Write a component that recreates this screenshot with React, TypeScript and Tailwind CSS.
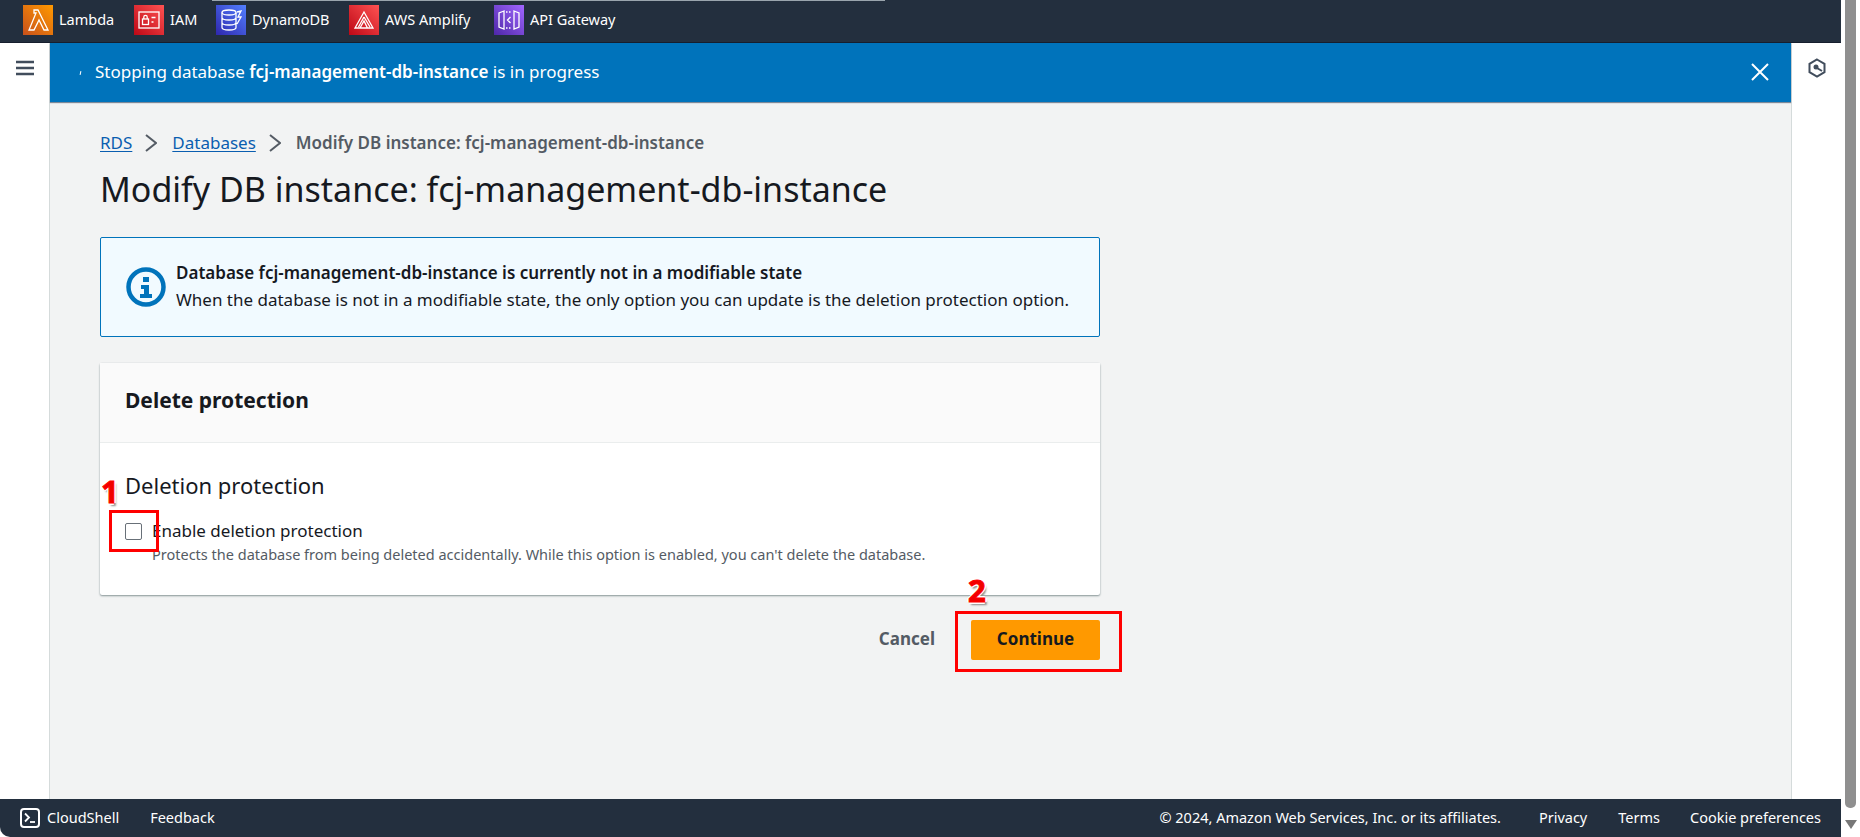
import { useState } from "react";

function ServiceIcon({ id, from, to, children }: { id: string; from: string; to: string; children: React.ReactNode }) {
  return (
    <svg width="30" height="30" viewBox="0 0 30 30" className="shrink-0">
      <defs>
        <linearGradient id={id} x1="0" y1="1" x2="1" y2="0">
          <stop offset="0" stopColor={from} />
          <stop offset="1" stopColor={to} />
        </linearGradient>
      </defs>
      <rect width="30" height="30" fill={`url(#${id})`} />
      <g fill="none" stroke="#fff" strokeWidth="1.3">
        {children}
      </g>
    </svg>
  );
}

const services = [
  {
    name: "Lambda",
    width: "w-[111px]",
    icon: (
      <ServiceIcon id="lambda" from="#c8511b" to="#ff9900">
        <path d="M6 25h5l5-10 5 10h4L15 5h-4v3h2L6 25z" />
      </ServiceIcon>
    ),
  },
  {
    name: "IAM",
    width: "w-[82px]",
    icon: (
      <ServiceIcon id="iam" from="#bd0816" to="#ff5252">
        <rect x="5" y="7" width="20" height="16" />
        <rect x="8.5" y="14" width="6" height="5.5" />
        <path d="M9.8 14v-2a1.7 1.7 0 0 1 3.4 0v2M17.5 12.5h4M17.5 17h2" />
      </ServiceIcon>
    ),
  },
  {
    name: "DynamoDB",
    width: "w-[133px]",
    icon: (
      <ServiceIcon id="dynamo" from="#2e27ad" to="#527fff">
        <ellipse cx="13" cy="7.5" rx="7" ry="2.5" />
        <path d="M6 7.500v15c0 1.400 3 2.500 7 2.500s7-1.100 7-2.500v-15M6 12.500c0 1.400 3 2.500 7 2.500s7-1.100 7-2.500M6 17.500c0 1.400 3 2.500 7 2.500s7-1.100 7-2.500M21 7l4-1-3 6h3l-4 7" />
      </ServiceIcon>
    ),
  },
  {
    name: "AWS Amplify",
    width: "w-[145px]",
    icon: (
      <ServiceIcon id="amplify" from="#bd0816" to="#ff5252">
        <path d="M15 7L6 23h18L15 7zM15 12l-5.500 10M15 12l6 10M11 23l4-7 3.500 7" />
      </ServiceIcon>
    ),
  },
  {
    name: "API Gateway",
    width: "w-[122px]",
    icon: (
      <ServiceIcon id="apigw" from="#4d27a8" to="#a166ff">
        <path d="M10 6L5 8v14l5 2V6zM20 6l5 2v14l-5 2V6zM16.500 12l-3 3 3 3" />
        <path d="M12 7h6M12 23h6" strokeDasharray="1.500 1.500" />
      </ServiceIcon>
    ),
  },
];

function Crumb() {
  return (
    <svg width="12" height="18" viewBox="0 0 12 18" className="shrink-0">
      <path d="M1 1l10 8-10 8" fill="none" stroke="#545b64" strokeWidth="2" />
    </svg>
  );
}

function Step({ label }: { label: string }) {
  return (
    <span className="text-[31px] leading-none font-bold text-[#f00000] [-webkit-text-stroke:1px_#ff0000] [text-shadow:-2px_0_0_#fff,2px_0_0_#fff,0_-2px_0_#fff,0_2px_0_#fff,2px_3px_2px_#8a8a8a]">
      {label}
    </span>
  );
}

export default function App() {
  const [enabled, setEnabled] = useState(false);

  return (
    <div className="flex h-[837px] w-[1860px] overflow-hidden bg-white font-['Noto_Sans',sans-serif]">
      <div className="flex w-[1841px] flex-col">
        {/* top bar */}
        <div className="relative flex h-[43px] shrink-0 items-center border-b border-[#161e2d] bg-[#232f3e] pb-[2px] pl-[23px] text-[14.500px] text-white">
          <div className="absolute top-0 left-[212px] h-px w-[673px] bg-[#9aa5ad]" />
          {services.map((s) => (
            <div key={s.name} className={`flex items-center gap-[6px] ${s.width}`}>
              {s.icon}
              <span>{s.name}</span>
            </div>
          ))}
        </div>

        <div className="flex min-h-0 flex-1">
          {/* left rail */}
          <div className="w-[49px] shrink-0 bg-white pt-[17px] pl-[16px]">
            <svg width="18" height="16" viewBox="0 0 18 16">
              <path d="M0 2h18M0 8h18M0 14h18" stroke="#414d5c" strokeWidth="2.500" />
            </svg>
          </div>

          {/* main content */}
          <div className="relative min-w-0 flex-1 border-x border-[#d5dbdb] bg-[#f2f3f3]">
            <div className="flex h-[59px] items-center bg-[#0073bb] pr-[22px] pb-[2px] pl-[30px] text-[17px] text-white shadow-[0_1px_1px_#7d8998]">
              <span className="mt-[2px] mr-[14px] h-[4px] w-px rotate-12 bg-white" />
              <span>
                Stopping database <b className="font-semibold">fcj-management-db-instance</b> is in progress
              </span>
              <svg width="18" height="18" viewBox="0 0 18 18" className="ml-auto">
                <path d="M1 1l16 16M17 1L1 17" stroke="#fff" strokeWidth="2" />
              </svg>
            </div>

            <div className="ml-[50px] w-[1000px] pt-[30px]">
              <div className="flex h-[22px] items-center text-[17px]">
                <a className="text-[#0a5eb0] underline underline-offset-2">RDS</a>
                <span className="mr-[15px] ml-[13px]"><Crumb /></span>
                <a className="text-[#0a5eb0] underline underline-offset-2">Databases</a>
                <span className="mr-[15px] ml-[13px]"><Crumb /></span>
                <span className="font-semibold text-[#545b64]">Modify DB instance: fcj-management-db-instance</span>
              </div>

              <h1 className="mt-[13px] text-[34px] leading-[44px] text-[#16191f]">Modify DB instance: fcj-management-db-instance</h1>

              <div className="mt-[26px] flex h-[100px] items-center rounded-[2px] border-[1.500px] border-[#0073bb] bg-[#f1faff] pl-[25px] text-[17px] leading-[27px] text-[#16191f]">
                <svg width="40" height="40" viewBox="0 0 40 40" className="shrink-0">
                  <circle cx="20" cy="20" r="17.500" fill="none" stroke="#0073bb" strokeWidth="4.500" />
                  <path d="M17 10h6v5h-6zM15 18h8v9h3v4H14v-4h4v-5h-3z" fill="#0073bb" />
                </svg>
                <div className="mt-[-3px] ml-[10px]">
                  <div className="font-semibold">Database fcj-management-db-instance is currently not in a modifiable state</div>
                  <div>When the database is not in a modifiable state, the only option you can update is the deletion protection option.</div>
                </div>
              </div>

              <div className="mt-[26px] h-[232px] rounded-[2px] bg-white shadow-[0_1px_2px_#879596,0_0_1px_#c5cbcf]">
                <div className="flex h-[80px] items-center border-b border-[#eaeded] bg-[#fafafa] pb-[4px] pl-[25px] text-[21px] font-bold text-[#16191f]">
                  Delete protection
                </div>
                <div className="pt-[26px] pl-[25px]">
                  <div className="text-[22px] leading-[32px] text-[#16191f]">Deletion protection</div>
                  <label className="mt-[18px] flex items-start">
                    <input
                      type="checkbox"
                      checked={enabled}
                      onChange={(e) => setEnabled(e.target.checked)}
                      className="mt-[4px] h-[17px] w-[17px] appearance-none rounded-[2px] border border-[#687078] bg-white"
                    />
                    <span className="ml-[10px]">
                      <span className="block text-[17px] leading-[24px] text-[#16191f]">Enable deletion protection</span>
                      <span className="block text-[14.500px] leading-[22px] text-[#545b64]">
                        Protects the database from being deleted accidentally. While this option is enabled, you can't delete the database.
                      </span>
                    </span>
                  </label>
                </div>
              </div>

              <div className="mt-[25px] flex items-center justify-end">
                <button className="mr-[36px] pb-[2px] text-[17px] font-bold text-[#545b64]">Cancel</button>
                <button className="h-[40px] w-[129px] rounded-[2px] bg-[#ff9900] pb-[2px] text-[17px] font-bold text-[#16191f]">Continue</button>
              </div>
            </div>

            {/* annotations */}
            <div className="absolute top-[467px] left-[59px] h-[42px] w-[50px] border-[3.500px] border-[#ff0000]" />
            <div className="absolute top-[568px] left-[905px] h-[61px] w-[167px] border-[3.500px] border-[#ff0000]" />
            <div className="absolute top-[433px] left-[51px]"><Step label="1" /></div>
            <div className="absolute top-[532px] left-[918px]"><Step label="2" /></div>
          </div>

          {/* right rail */}
          <div className="w-[49px] shrink-0 bg-white pt-[15px] pl-[15px]">
            <svg width="20" height="20" viewBox="0 0 20 20">
              <path d="M10 1.500l7.500 4.300v8.400L10 18.500l-7.500-4.300V5.800z" fill="none" stroke="#414d5c" strokeWidth="2" />
              <circle cx="9" cy="9" r="2.500" fill="#414d5c" />
              <path d="M10 10l5 3" stroke="#414d5c" strokeWidth="2" />
            </svg>
          </div>
        </div>

        {/* footer */}
        <div className="flex h-[38px] shrink-0 items-center rounded-bl-[10px] bg-[#232f3e] pr-[20px] pl-[20px] text-[14.500px] text-white">
          <svg width="20" height="20" viewBox="0 0 20 20" className="shrink-0">
            <rect x="1" y="1" width="18" height="18" rx="3" fill="none" stroke="#fff" strokeWidth="2" />
            <path d="M5 5.500l4 4-4 4" fill="none" stroke="#fff" strokeWidth="1.800" />
            <path d="M10 14h5" stroke="#fff" strokeWidth="1.800" />
          </svg>
          <span className="ml-[7px]">CloudShell</span>
          <span className="ml-[31px]">Feedback</span>
          <span className="ml-auto">© 2024, Amazon Web Services, Inc. or its affiliates.</span>
          <span className="ml-[38px]">Privacy</span>
          <span className="ml-[31px]">Terms</span>
          <span className="ml-[30px]">Cookie preferences</span>
        </div>
      </div>

      {/* scrollbar */}
      <div className="flex w-[19px] flex-col items-start pl-[4px]">
        <div className="h-[808px] w-[11px] rounded-b-[5px] bg-[#8f8f8f]" />
        <svg width="12" height="9" viewBox="0 0 12 9" className="mt-[12px]">
          <path d="M0 0h12L6 9z" fill="#777" />
        </svg>
      </div>
    </div>
  );
}
